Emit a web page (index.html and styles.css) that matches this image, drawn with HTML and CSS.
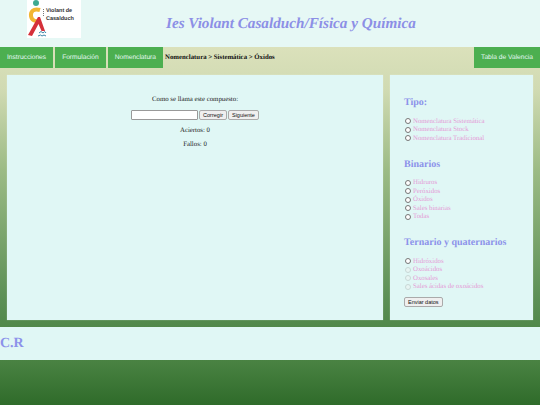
FILE: index.html
```html
<!DOCTYPE html>
<html lang="es">
<head>
<meta charset="utf-8">
<title>Ies Violant Casalduch</title>
<link rel="stylesheet" href="styles.css">
</head>
<body>
<header class="header">
  <div class="logo">
    <svg class="logo-mark" viewBox="0 0 28 38" width="28" height="38" aria-hidden="true">
      <circle cx="9" cy="3" r="3" fill="#3fa98f"/>
      <path d="M13 10 C6 8 3.500 12 4 16 C4.500 20 8 22 13 21" fill="none" stroke="#f2b632" stroke-width="4"/>
      <path d="M1 35 L11 17 L13 17 L18 31 L14.500 31 L11.500 24 L5 36 Z" fill="#d5303a"/>
      <path d="M12 33 q2 -3 4 0 q2 -3 3 0 M11 36 q3 -2 4 0 q2 -2 4 0" fill="none" stroke="#3b86a8" stroke-width="1"/>
      <path d="M16.500 9 V17" stroke="#777" stroke-width="1" stroke-dasharray="1 1"/>
    </svg>
    <div class="logo-text">Violant de<br>Casalduch</div>
  </div>
  <h1 class="title">Ies Violant Casalduch/Física y Química</h1>
</header>
<nav class="nav">
  <a class="nav-item">Instrucciones</a>
  <a class="nav-item">Formulación</a>
  <a class="nav-item">Nomenclatura</a>
  <span class="crumb">Nomenclatura &gt; Sistemática &gt; Óxidos</span>
  <a class="nav-item nav-right">Tabla de Valencia</a>
</nav>
<main class="main">
  <section class="panel quiz">
    <p class="quiz-q">Como se llama este compuesto:</p>
    <div class="quiz-form">
      <input class="quiz-input" type="text">
      <button class="btn">Corregir</button>
      <button class="btn">Siguiente</button>
    </div>
    <p class="quiz-line">Aciertos: 0</p>
    <p class="quiz-line">Fallos: 0</p>
  </section>
  <aside class="panel side">
    <h2 class="side-h first">Tipo:</h2>
    <ul class="opts">
      <li class="opt"><span class="radio"></span>Nomenclatura Sistemática</li>
      <li class="opt"><span class="radio"></span>Nomenclatura Stock</li>
      <li class="opt"><span class="radio"></span>Nomenclatura Tradicional</li>
    </ul>
    <h2 class="side-h">Binarios</h2>
    <ul class="opts">
      <li class="opt"><span class="radio"></span>Hidruros</li>
      <li class="opt"><span class="radio"></span>Peróxidos</li>
      <li class="opt"><span class="radio"></span>Óxidos</li>
      <li class="opt"><span class="radio"></span>Sales binarias</li>
      <li class="opt"><span class="radio"></span>Todas</li>
    </ul>
    <h2 class="side-h">Ternario y quaternarios</h2>
    <ul class="opts">
      <li class="opt"><span class="radio"></span>Hidróxidos</li>
      <li class="opt"><span class="radio off"></span>Oxoácidos</li>
      <li class="opt"><span class="radio off"></span>Oxosales</li>
      <li class="opt"><span class="radio off"></span>Sales ácidas de oxoácidos</li>
    </ul>
    <button class="btn send">Enviar datos</button>
  </aside>
</main>
<footer class="footer">C.R</footer>
</body>
</html>
```

FILE: styles.css
```css
* { box-sizing: border-box; }
html { height: 100%; }
body {
  margin: 0;
  height: 405px;
  overflow: hidden;
  font-family: "Liberation Serif", serif;
  text-rendering: geometricPrecision;
  background: linear-gradient(180deg, #dbe1bb 47px, #d0dab2 90px, #9cbb85 170px, #5b8f55 300px, #4f8749 330px, #4a8343 360px, #2f6b2a 405px);
}
.header, .nav, .main, .footer { opacity: .999; }
.header {
  height: 47px;
  background: #e6f8f5;
  display: flex;
  align-items: flex-start;
}
.logo {
  width: 54px;
  height: 38px;
  margin-left: 27px;
  background: #fff;
  display: flex;
}
.logo-mark { flex: none; }
.logo-text {
  font-family: "Liberation Sans", sans-serif;
  font-weight: bold;
  font-size: 5.500px;
  line-height: 8px;
  color: #333;
  margin: 7px 0 0 -9px;
  white-space: nowrap;
}
.title {
  margin: 15px 0 0 85px;
  font-size: 15.200px;
  line-height: 18px;
  font-style: italic;
  font-weight: bold;
  color: #8c8fe6;
  white-space: nowrap;
}
.nav {
  height: 21px;
  display: flex;
  align-items: stretch;
}
.nav-item {
  font-family: "Liberation Sans", sans-serif;
  font-size: 6.650px;
  line-height: 21px;
  color: #e6f8f5;
  background: #4caf50;
  padding: 0 7px;
  margin-right: 2px;
  white-space: nowrap;
}
.crumb {
  font-size: 6.800px;
  line-height: 21px;
  font-weight: bold;
  color: #111;
  white-space: nowrap;
}
.nav-right { margin: 0 0 0 auto; }
.main {
  display: flex;
  gap: 7px;
  padding: 7px 7px 0;
  height: 259px;
}
.panel {
  height: 245px;
  background: #e0f7f5;
  box-shadow: 0 0 1px rgba(255, 255, 255, .5);
}
.quiz {
  width: 376px;
  padding-top: 20px;
  text-align: center;
  font-size: 6.800px;
  color: #222;
}
.quiz p { margin: 0; }
.quiz-q { line-height: 9px; }
.quiz-form {
  display: flex;
  justify-content: center;
  gap: 1px;
  margin: 6px 0;
  height: 10px;
}
.quiz-input {
  width: 67px;
  height: 10px;
  padding: 0;
  border: 1px solid #999;
  border-radius: 1px;
  background: #fff;
}
.btn {
  font-family: "Liberation Sans", sans-serif;
  font-size: 5.500px;
  line-height: 8px;
  height: 10px;
  padding: 0 3px;
  border: 1px solid #aaa;
  border-radius: 2px;
  background: #efefef;
  color: #111;
}
.quiz-line { line-height: 9px; margin-bottom: 5px !important; }
.side {
  width: 143px;
  padding: 22px 14px 0;
}
.side-h {
  margin: 16px 0 8px;
  font-size: 10px;
  line-height: 12px;
  font-weight: bold;
  color: #8c92ea;
  white-space: nowrap;
}
.side-h.first { margin: 0 0 8px; }
.opts { list-style: none; margin: 0; padding: 0; }
.opt {
  display: flex;
  align-items: center;
  height: 8.500px;
  font-size: 6.800px;
  color: #e49ad6;
  white-space: nowrap;
}
.radio {
  flex: none;
  width: 6px;
  height: 6px;
  margin: 0 2px 0 1px;
  border: 1px solid #767676;
  border-radius: 50%;
  background: #fff;
}
.radio.off { border-color: #c8d8d6; background: #e8f5f3; }
.send { display: block; margin-top: 6px; }
.footer {
  height: 33px;
  background: #e0f7f5;
  font-size: 14px;
  line-height: 34px;
  font-weight: bold;
  color: #8c92ea;
}
```
